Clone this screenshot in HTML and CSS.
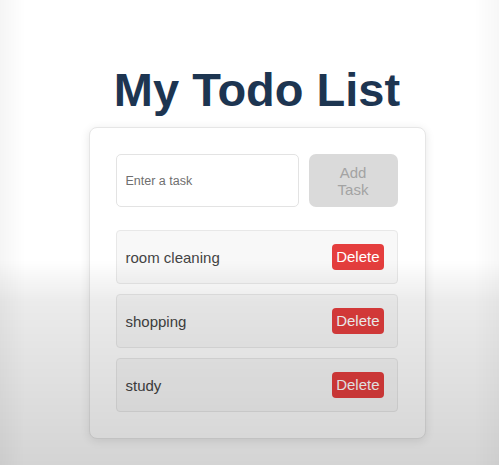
FILE: index.html
```html
<!DOCTYPE html>
<html lang="en">
<head>
<meta charset="utf-8">
<title>My Todo List</title>
<link rel="stylesheet" href="styles.css">
</head>
<body>
<main class="page">
  <h1 class="title">My Todo List</h1>
  <section class="card">
    <form class="add-row">
      <input class="task-input" type="text" placeholder="Enter a task">
      <button class="add-btn" type="button">Add<br>Task</button>
    </form>
    <ul class="todo-list">
      <li class="todo-item"><span class="todo-text">room cleaning</span><button class="delete-btn" type="button">Delete</button></li>
      <li class="todo-item"><span class="todo-text">shopping</span><button class="delete-btn" type="button">Delete</button></li>
      <li class="todo-item"><span class="todo-text">study</span><button class="delete-btn" type="button">Delete</button></li>
    </ul>
  </section>
</main>
<div class="shade"></div>
</body>
</html>
```

FILE: styles.css
```css
html, body {
  margin: 0;
  padding: 0;
}
body {
  width: 499px;
  height: 465px;
  overflow: hidden;
  background: #ffffff;
  font-family: "Liberation Sans", Arial, sans-serif;
}
.page {
  display: flex;
  flex-direction: column;
  align-items: center;
  padding-top: 63px;
  padding-left: 15px;
}
.title {
  margin: 0 0 10px;
  font-size: 47px;
  line-height: 54px;
  font-weight: 700;
  color: #1d3551;
}
.card {
  box-sizing: border-box;
  width: 337px;
  padding: 26px 27px 26px 26px;
  background: #ffffff;
  border: 1px solid #e6e6e6;
  border-radius: 8px;
  box-shadow: 0 2px 10px rgba(0, 0, 0, 0.10);
}
.add-row {
  display: flex;
  gap: 10px;
  margin: 0 0 23px;
}
.task-input {
  box-sizing: border-box;
  width: 183px;
  height: 53px;
  padding: 0 9px;
  border: 1px solid #e3e3e3;
  border-radius: 5px;
  font-family: "Liberation Sans", Arial, sans-serif;
  font-size: 12.5px;
  color: #333;
  outline: none;
}
.task-input::placeholder {
  color: #6f6f6f;
}
.add-btn {
  box-sizing: border-box;
  width: 89px;
  height: 53px;
  border: none;
  border-radius: 7px;
  background: #dadada;
  color: #a3a3a3;
  font-family: "Liberation Sans", Arial, sans-serif;
  font-size: 15px;
  line-height: 17px;
  padding: 0;
}
.todo-list {
  list-style: none;
  margin: 0;
  padding: 0;
  display: flex;
  flex-direction: column;
  gap: 10px;
}
.todo-item {
  box-sizing: border-box;
  height: 54px;
  display: flex;
  align-items: center;
  justify-content: space-between;
  padding: 0 13px 0 9px;
  background: #f8f8f8;
  border: 1px solid #e8e8e8;
  border-radius: 4px;
}
.todo-text {
  font-size: 15px;
  color: #444444;
}
.delete-btn {
  border: none;
  border-radius: 4px;
  background: #e53e3e;
  color: #ffffff;
  font-family: "Liberation Sans", Arial, sans-serif;
  font-size: 15px;
  line-height: 18px;
  padding: 4px 4px;
}
.shade {
  position: fixed;
  inset: 0;
  pointer-events: none;
  background:
    linear-gradient(to right, rgba(0,0,0,0.04) 0, rgba(0,0,0,0) 5%, rgba(0,0,0,0) 95%, rgba(0,0,0,0.03) 100%),
    linear-gradient(to bottom, rgba(0,0,0,0) 0, rgba(0,0,0,0) 56%, rgba(0,0,0,0.08) 65%, rgba(0,0,0,0.17) 100%);
}
```
